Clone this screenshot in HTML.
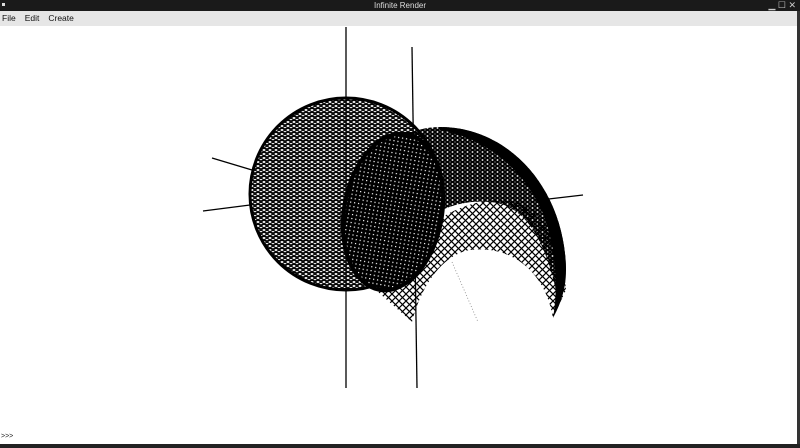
<!DOCTYPE html>
<html><head><style>
html,body{margin:0;padding:0;width:800px;height:448px;overflow:hidden;background:#fff;font-family:"Liberation Sans",sans-serif}
.title{position:absolute;left:0;top:0;width:800px;height:11px;background:#1a1a1a;color:#ddd;font-size:8px;line-height:11px;text-align:center}
.menu{position:absolute;left:0;top:11px;width:797px;height:15px;background:#e6e6e6;font-size:8.5px;line-height:15px;color:#111}
.menu span{margin-left:2px;margin-right:7px}
.bot{position:absolute;left:0;top:444px;width:800px;height:4px;background:#222}
.rb{position:absolute;right:0;top:11px;width:3px;height:437px;background:#333}
.prompt{position:absolute;left:1px;top:433px;font-size:7px;color:#222}
svg{position:absolute;left:0;top:0}
</style></head><body>
<div class="title">Infinite Render</div>
<div style="position:absolute;left:2px;top:3px;width:3px;height:3px;background:#ddd"></div>
<div style="position:absolute;right:4px;top:1px;color:#ccc;font-size:9px;line-height:9px">▁ ☐ ✕</div>
<div class="menu"><span>File</span><span>Edit</span><span>Create</span></div>
<svg width="800" height="448">
<defs>
<pattern id="sp" width="6" height="4" patternUnits="userSpaceOnUse">
<line x1="0" y1="0" x2="6" y2="0" stroke="#000" stroke-width="1.6"/>
<line x1="0" y1="4" x2="6" y2="0" stroke="#000" stroke-width="1.2"/>
<line x1="0" y1="0" x2="6" y2="4" stroke="#000" stroke-width="1.2"/>
</pattern>
<pattern id="lh" width="7" height="7" patternUnits="userSpaceOnUse">
<line x1="0" y1="0" x2="7" y2="7" stroke="#000" stroke-width="1.2"/>
<line x1="0" y1="7" x2="7" y2="0" stroke="#000" stroke-width="1.2"/>
</pattern>
<pattern id="dh" width="4" height="4" patternUnits="userSpaceOnUse">
<rect width="4" height="4" fill="#000"/>
<rect x="1" y="1" width="1.2" height="1.2" fill="#fff"/>
</pattern>
<pattern id="mh" width="5" height="4" patternUnits="userSpaceOnUse">
<line x1="0" y1="0" x2="5" y2="4" stroke="#000" stroke-width="1.6"/>
<line x1="0" y1="4" x2="5" y2="0" stroke="#000" stroke-width="1.6"/>
<line x1="0" y1="2" x2="5" y2="2" stroke="#000" stroke-width="0.9"/>
</pattern>
<clipPath id="sc"><circle cx="346" cy="194" r="97"/></clipPath>
</defs>
<g stroke="#000" stroke-width="1.3">
<line x1="346" y1="27" x2="346" y2="388"/>
<line x1="412" y1="47" x2="417" y2="388"/>
<line x1="212" y1="158" x2="252" y2="170"/>
<line x1="203" y1="211" x2="250" y2="205"/>
<line x1="540" y1="200" x2="583" y2="195"/>
</g>
<rect x="248" y="96" width="196" height="196" fill="url(#sp)" clip-path="url(#sc)"/>
<circle cx="346" cy="194" r="96" fill="none" stroke="#000" stroke-width="3"/>
<path d="M378,292 C400,240 450,200 500,200 C540,200 562,240 566,290 L553,318 C545,270 510,245 470,250 C440,255 420,290 412,322 Z" fill="url(#lh)"/>
<path d="M345,215 C350,160 400,127 440,127 C510,127 565,190 566,270 L558,300 C548,250 530,205 490,202 C465,200 445,206 420,222 Z" fill="url(#mh)"/>
<path d="M440,127 C510,127 565,190 566,270 C566,290 560,305 553,318 C558,290 556,255 548,228 C535,182 495,140 440,130 Z" fill="#000"/>
<ellipse cx="393" cy="212" rx="50" ry="80" transform="rotate(10 393 212)" fill="url(#dh)"/>
<ellipse cx="393" cy="212" rx="49" ry="79" transform="rotate(10 393 212)" fill="none" stroke="#000" stroke-width="4"/>
<line x1="452" y1="262" x2="478" y2="322" stroke="#888" stroke-width="0.8" stroke-dasharray="1,2"/>
</svg>
<div class="rb"></div>
<div class="prompt">&gt;&gt;&gt;</div>
<div class="bot"></div>
</body></html>
